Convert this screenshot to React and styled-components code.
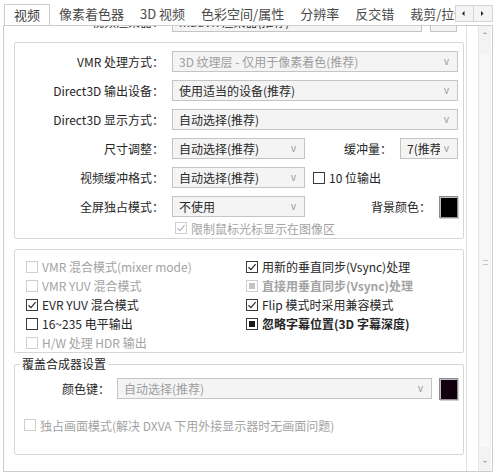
import styled, { createGlobalStyle } from 'styled-components';

const GlobalStyle = createGlobalStyle`
  html, body {
    margin: 0;
    padding: 0;
    background: #fff;
  }
  body {
    font-family: "Noto Sans CJK SC", "Noto Sans", sans-serif;
    font-size: 12px;
    color: #262626;
  }
`;

const Window = styled.div`
  width: 500px;
  height: 473px;
  display: flex;
  flex-direction: column;
  overflow: hidden;
  background: #fff;
`;

const TabStrip = styled.div`
  display: flex;
  align-items: flex-end;
  height: 25px;
  padding: 0 7px 0 4px;
  flex: none;
`;

const TabList = styled.div`
  display: flex;
  align-items: flex-end;
  flex: 1;
  overflow: hidden;
  height: 25px;
`;

const Tab = styled.div`
  flex: none;
  box-sizing: border-box;
  height: ${p => (p.$active ? '22px' : '20px')};
  line-height: ${p => (p.$active ? '19px' : '18px')};
  padding: 0 ${p => (p.$active ? '9px' : '8px')};
  font-size: 13px;
  color: ${p => (p.$active ? '#3a3a3a' : '#4a4a4a')};
  background: #fff;
  border: ${p => (p.$active ? '1px solid #cdcdcd' : 'none')};
  border-bottom: none;
  margin-bottom: ${p => (p.$active ? '-1px' : '0')};
  margin-right: ${p => (p.$active ? '1px' : '0')};
  position: relative;
  z-index: ${p => (p.$active ? 1 : 0)};
  white-space: nowrap;
`;

const TabArrows = styled.div`
  display: flex;
  flex: none;
  align-self: center;
  margin-top: 2px;
`;

const ArrowBtn = styled.div`
  width: 19px;
  height: 17px;
  box-sizing: border-box;
  border: 1px solid #d4d4d4;
  background: #f4f4f4;
  display: flex;
  align-items: center;
  justify-content: center;
  & + & {
    border-left: none;
  }
`;

const TabPage = styled.div`
  flex: none;
  height: 447px;
  margin: 0 7px 0 3px;
  box-sizing: border-box;
  border: 1px solid #cdcdcd;
  display: flex;
`;

const Viewport = styled.div`
  flex: 1;
  overflow: hidden;
  border-right: 1px solid #e2e2e2;
`;

const Content = styled.div`
  margin-top: -15px;
  padding: 0 2px 0 10px;
  display: flex;
  flex-direction: column;
`;

const ScrollColumn = styled.div`
  width: 24px;
  flex: none;
  display: flex;
  justify-content: flex-end;
  padding-right: 1px;
`;

const Track = styled.div`
  width: 12px;
  background: #f3f3f3;
  border-left: 1px solid #e6e6e6;
  display: flex;
  flex-direction: column;
  align-items: center;
`;

const TrackArrow = styled.div`
  height: 16px;
  display: flex;
  align-items: center;
  justify-content: center;
  flex: none;
`;

const Thumb = styled.div`
  flex: 1;
  width: 10px;
  margin: 12px 0 8px;
  background: #f8f8f8;
  display: flex;
  align-items: center;
  justify-content: center;
`;

const Grip = styled.div`
  width: 5px;
  height: 5px;
  border-top: 1px solid #c8c8c8;
  border-bottom: 1px solid #c8c8c8;
  box-sizing: border-box;
  margin-top: 24px;
`;

const Row = styled.div`
  display: flex;
  align-items: center;
  height: 21px;
  gap: ${p => p.$gap ?? 8}px;
  padding-right: ${p => p.$pr ?? 0}px;
`;

const Label = styled.span`
  flex: none;
  width: ${p => p.$w ?? 149}px;
  text-align: right;
  white-space: nowrap;
  color: #262626;
`;

const InlineLabel = styled.span`
  white-space: nowrap;
  color: #262626;
`;

const Spacer = styled.span`
  flex: 1;
`;

const SelectBox = styled.div`
  display: flex;
  align-items: center;
  box-sizing: border-box;
  height: 21px;
  border: 1px solid #c4c4c4;
  background: #f4f4f4;
  padding: 0 8px 0 6px;
  width: ${p => (p.$w ? `${p.$w}px` : 'auto')};
  flex: ${p => (p.$w ? 'none' : 1)};
  min-width: 0;
  color: ${p => (p.$disabled ? '#9e9e9e' : '#2a2a2a')};
`;

const SelectText = styled.span`
  flex: 1;
  min-width: 0;
  overflow: hidden;
  white-space: nowrap;
`;

const Chevron = styled.span`
  flex: none;
  font-family: "Liberation Sans", sans-serif;
  font-size: 10px;
  color: #9a9a9a;
  margin-left: 4px;
`;

const DotsButton = styled.div`
  flex: none;
  width: 27px;
  height: 21px;
  box-sizing: border-box;
  border: 1px solid #c4c4c4;
  background: #f4f4f4;
  color: #888;
  display: flex;
  align-items: center;
  justify-content: center;
  font-size: 10px;
`;

const Swatch = styled.div`
  flex: none;
  width: 19px;
  height: 22px;
  box-sizing: border-box;
  background: ${p => p.$color};
  border: 1px solid #8c8c8c;
  box-shadow: inset 1px 1px 0 #bdbdbd, 1px 1px 0 #d0d0d0;
`;

const Group = styled.fieldset`
  margin: ${p => p.$mt ?? 10}px 0 0;
  padding: ${p => p.$pad};
  border: 1px solid #d6d6d6;
  border-radius: 2px;
  min-width: 0;
  display: flex;
  flex-direction: column;
  gap: ${p => p.$gap ?? 0}px;
`;

const Legend = styled.legend`
  margin-left: 5px;
  padding: 0 2px;
  line-height: 18px;
  color: #262626;
`;

const CheckGrid = styled.div`
  display: grid;
  grid-template-columns: 220px 1fr;
  grid-template-rows: repeat(5, 19px);
  grid-auto-flow: column;
  align-items: center;
`;

const CheckRow = styled.label`
  display: flex;
  align-items: center;
  gap: 4px;
  white-space: nowrap;
  margin-left: ${p => p.$indent ?? 0}px;
  color: ${p => (p.$disabled ? '#a3a3a3' : '#262626')};
  font-weight: ${p => (p.$bold ? 700 : 400)};
`;

const Box = styled.span`
  flex: none;
  width: 12px;
  height: 12px;
  box-sizing: border-box;
  border: 1px solid ${p => (p.$disabled ? '#cfcfcf' : '#3a3a3a')};
  background: #fff;
  display: flex;
  align-items: center;
  justify-content: center;
`;

const Fill = styled.span`
  width: 6px;
  height: 6px;
  background: ${p => (p.$disabled ? '#c4c4c4' : '#1a1a1a')};
`;

function Select({ text, w, disabled }) {
  return (
    <SelectBox $w={w} $disabled={disabled}>
      <SelectText>{text}</SelectText>
      <Chevron>v</Chevron>
    </SelectBox>
  );
}

function Check({ label, state = 'off', disabled, bold, indent }) {
  const stroke = disabled ? '#b5b5b5' : '#2a2a2a';
  return (
    <CheckRow $disabled={disabled} $bold={bold} $indent={indent}>
      <Box $disabled={disabled}>
        {state === 'on' && (
          <svg width="10" height="10" viewBox="0 0 10 10">
            <path d="M1.5 5.2 L4 7.6 L8.6 2.2" fill="none" stroke={stroke} strokeWidth="1.2" />
          </svg>
        )}
        {state === 'mixed' && <Fill $disabled={disabled} />}
      </Box>
      {label}
    </CheckRow>
  );
}

function Tri({ dir, color = '#222', size = 3 }) {
  const pts = {
    left: `${size + 1},1 ${size + 1},${size * 2 + 1} 1,${size + 1}`,
    right: `1,1 1,${size * 2 + 1} ${size + 1},${size + 1}`,
    up: `1,${size + 1} ${size * 2 + 1},${size + 1} ${size + 1},1`,
    down: `1,1 ${size * 2 + 1},1 ${size + 1},${size + 1}`,
  }[dir];
  return (
    <svg width={size * 2 + 2} height={size * 2 + 2} viewBox={`0 0 ${size * 2 + 2} ${size * 2 + 2}`}>
      <polygon points={pts} fill={color} />
    </svg>
  );
}

const tabs = ['视频', '像素着色器', '3D 视频', '色彩空间/属性', '分辨率', '反交错', '裁剪/拉伸'];

export default function App() {
  return (
    <>
      <GlobalStyle />
      <Window>
        <TabStrip>
          <TabList>
            {tabs.map((t, i) => (
              <Tab key={t} $active={i === 0}>{t}</Tab>
            ))}
          </TabList>
          <TabArrows>
            <ArrowBtn><Tri dir="left" size={2.5} /></ArrowBtn>
            <ArrowBtn><Tri dir="right" size={2.5} /></ArrowBtn>
          </TabArrows>
        </TabStrip>

        <TabPage>
          <Viewport>
            <Content>
              <Row $pr={7}>
                <Label $w={150}>视频渲染器：</Label>
                <Select text="madVR 渲染器(推荐)" />
                <DotsButton>···</DotsButton>
              </Row>

              <Group $pad="8px 5px 3px 0" $gap={8}>
                <Row>
                  <Label>VMR 处理方式：</Label>
                  <Select text="3D 纹理层 - 仅用于像素着色(推荐)" disabled />
                </Row>
                <Row>
                  <Label>Direct3D 输出设备：</Label>
                  <Select text="使用适当的设备(推荐)" />
                </Row>
                <Row>
                  <Label>Direct3D 显示方式：</Label>
                  <Select text="自动选择(推荐)" />
                </Row>
                <Row>
                  <Label>尺寸调整：</Label>
                  <Select text="自动选择(推荐)" w={133} />
                  <Spacer />
                  <InlineLabel>缓冲量：</InlineLabel>
                  <Select text="7(推荐)" w={58} />
                </Row>
                <Row>
                  <Label>视频缓冲格式：</Label>
                  <Select text="自动选择(推荐)" w={133} />
                  <Check label="10 位输出" />
                </Row>
                <Row>
                  <Label>全屏独占模式：</Label>
                  <Select text="不使用" w={133} />
                  <Spacer />
                  <InlineLabel>背景颜色：</InlineLabel>
                  <Swatch $color="#000" />
                </Row>
                <Row style={{ height: 14, marginTop: -4 }}>
                  <Check label="限制鼠标光标显示在图像区" state="on" disabled indent={160} />
                </Row>
              </Group>

              <Group $pad="7px 0 0 11px">
                <CheckGrid>
                  <Check label="VMR 混合模式(mixer mode)" disabled />
                  <Check label="VMR YUV 混合模式" disabled />
                  <Check label="EVR YUV 混合模式" state="on" />
                  <Check label="16~235 电平输出" />
                  <Check label="H/W 处理 HDR 输出" disabled />
                  <Check label="用新的垂直同步(Vsync)处理" state="on" />
                  <Check label="直接用垂直同步(Vsync)处理" state="mixed" disabled bold />
                  <Check label="Flip 模式时采用兼容模式" state="on" />
                  <Check label="忽略字幕位置(3D 字幕深度)" state="mixed" bold />
                </CheckGrid>
              </Group>

              <Group $mt={2} $pad="5px 5px 22px 0" $gap={19}>
                <Legend>覆盖合成器设置</Legend>
                <Row $gap={7}>
                  <Label $w={95}>颜色键：</Label>
                  <Select text="自动选择(推荐)" disabled />
                  <Swatch $color="#12000f" />
                </Row>
                <Row style={{ height: 14 }}>
                  <Check label="独占画面模式(解决 DXVA 下用外接显示器时无画面问题)" disabled indent={9} />
                </Row>
              </Group>
            </Content>
          </Viewport>
          <ScrollColumn>
            <Track>
              <TrackArrow><Tri dir="up" color="#a8a8a8" size={2} /></TrackArrow>
              <Thumb><Grip /></Thumb>
              <TrackArrow><Tri dir="down" color="#a8a8a8" size={2} /></TrackArrow>
            </Track>
          </ScrollColumn>
        </TabPage>
      </Window>
    </>
  );
}
